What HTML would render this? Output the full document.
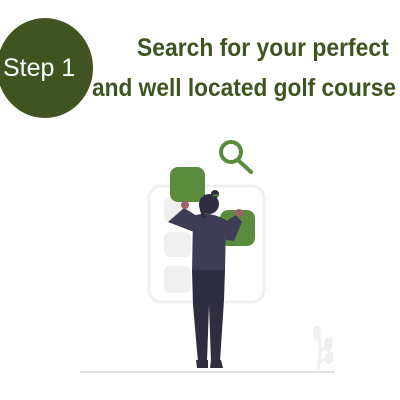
<!DOCTYPE html>
<html><head><style>
html,body{margin:0;padding:0;background:#fff;}
body{width:400px;height:400px;position:relative;overflow:hidden;font-family:"Liberation Sans",sans-serif;}
.c{position:absolute;left:-3px;top:18px;width:96px;height:100px;border-radius:50%;background:#3f5420;}
.s{position:absolute;left:3px;top:54px;color:#fff;font-size:25px;}
.t{position:absolute;color:#3f5420;font-family:"Liberation Sans Narrow","Liberation Sans",sans-serif;font-weight:bold;font-size:25px;white-space:nowrap;transform-origin:0 0;}
</style></head><body>
<div class="c"></div><div class="s">Step 1</div>
<div class="t" style="left:137px;top:34px;transform:scaleX(0.915)">Search for your perfect</div>
<div class="t" style="left:92px;top:74px;transform:scaleX(0.908)">and well located golf course</div>
<svg width="400" height="400" style="position:absolute;left:0;top:0">
<rect x="149" y="186" width="115" height="116" rx="12" fill="none" stroke="#efefef" stroke-width="3"/>
<rect x="164" y="197" width="27" height="26" rx="6" fill="#efefef"/>
<rect x="164" y="232" width="27" height="25" rx="6" fill="#efefef"/>
<rect x="164" y="266" width="27" height="27" rx="6" fill="#efefef"/>
<rect x="170" y="167" width="35" height="35" rx="8" fill="#5b8c3e"/>
<rect x="220" y="210" width="35" height="36" rx="8" fill="#5b8c3e"/>
<circle cx="231" cy="152" r="10" fill="none" stroke="#5b8c3e" stroke-width="4"/>
<line x1="238" y1="160" x2="251" y2="172" stroke="#5b8c3e" stroke-width="4" stroke-linecap="round"/>
<line x1="80" y1="372" x2="335" y2="372" stroke="#e3e3e3" stroke-width="2"/>
<path d="M318 370 Q322 350 318 330 M320 352 Q328 346 332 338 M319 362 Q328 360 333 352" stroke="#eee" stroke-width="3" fill="none"/>
<ellipse cx="317" cy="333" rx="4" ry="7" fill="#eee"/><ellipse cx="328" cy="345" rx="4" ry="7" fill="#eee"/><ellipse cx="329" cy="358" rx="4" ry="6" fill="#eee"/>
<path d="M197 216 L184 208 L168 222 L194 232 Z" fill="#3f3d56"/>
<path d="M225 222 L236 215 L242 222 L234 241 L226 240 Z" fill="#3f3d56"/>
<circle cx="185" cy="205" r="4" fill="#a0616a"/><circle cx="239" cy="213" r="4" fill="#a0616a"/>
<path d="M193 216 Q208 210 226 220 L225 272 L192 272 Z" fill="#3f3d56"/>
<path d="M192 270 L225 270 L224 300 L220 362 L211 362 L209 305 L207 362 L198 362 L193 305 Z" fill="#2f2e41"/>
<path d="M196 360 L208 360 L208 368 L197 368 Z M211 360 L221 360 L223 368 L210 368 Z" fill="#2f2e41"/>
<circle cx="209" cy="204" r="10" fill="#2f2e41"/>
<circle cx="215" cy="194" r="4" fill="#2f2e41"/>
<path d="M213 196 q3 -2 6 0" stroke="#5b8c3e" stroke-width="1.5" fill="none"/>
<path d="M199 206 L202 218 L206 218 L204 204 Z" fill="#2f2e41"/>
</svg>
</body></html>
